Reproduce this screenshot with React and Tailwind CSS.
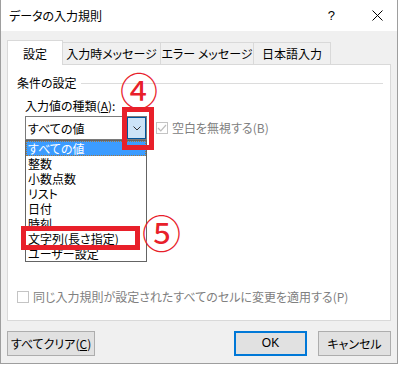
export default function App() {
  const items = ['すべての値', '整数', '小数点数', 'リスト', '日付', '時刻', '文字列(長さ指定)', 'ユーザー設定'];

  return (
    <div className="relative w-[400px] h-[366px] bg-white text-[12px] leading-[15px] text-black [font-family:'Noto_Sans_CJK_JP',sans-serif] [font-feature-settings:'palt']">
      <div className="w-[398px] h-[364px] border-x border-b border-[#9e9e9e] bg-[#f0f0f0] flex flex-col">
        {/* title bar */}
        <div className="h-[31px] bg-white flex items-center pl-[8px] pr-[14px] shrink-0">
          <span className="flex-1">データの入力規則</span>
          <span className="mr-[37px] text-[13px] [font-family:'Liberation_Sans',sans-serif]">?</span>
          <svg width="11" height="11" viewBox="0 0 11 11">
            <path d="M0.5 0.5 L10.5 10.5 M10.5 0.5 L0.5 10.5" stroke="#000" strokeWidth="1" />
          </svg>
        </div>

        <div className="px-[6px] pt-[9px] flex flex-col">
          {/* tabs */}
          <div className="flex items-end h-[25px] -mb-px relative z-10">
            <div className="h-[25px] w-[56px] bg-white border border-b-0 border-[#d9d9d9] flex items-center justify-center pt-[1px]">
              設定
            </div>
            <div className="h-[23px] w-[98px] border border-l-0 border-[#d9d9d9] flex items-center justify-center">
              入力時メッセージ
            </div>
            <div className="h-[23px] w-[93px] border border-l-0 border-[#d9d9d9] flex items-center justify-center">
              エラー メッセージ
            </div>
            <div className="h-[23px] w-[77px] border border-l-0 border-[#d9d9d9] flex items-center justify-center">
              日本語入力
            </div>
          </div>

          {/* panel */}
          <div className="w-[384px] h-[257px] bg-white border border-[#d9d9d9] flex flex-col">
            <div className="flex items-center pl-[9px] pr-[7px] pt-[10px]">
              <span>条件の設定</span>
              <div className="flex-1 h-px bg-[#dcdcdc] ml-[4px] mt-[1px]" />
            </div>

            <div className="pl-[17px] mt-[8px]">
              入力値の種類(<span className="underline">A</span>):
            </div>

            <div className="pl-[17px] mt-[3px] flex items-start">
              <div className="relative">
                <div className="w-[122px] h-[24px] border border-[#7a7a7a] bg-white flex items-center">
                  <span className="flex-1 pl-[2px]">すべての値</span>
                  <div className="w-[19px] h-[22px] bg-[#cce4f7] border border-[#005499] flex items-center justify-center">
                    <svg width="8" height="5" viewBox="0 0 8 5">
                      <path d="M0.5 0.5 L4 4 L7.5 0.5" fill="none" stroke="#333" strokeWidth="1" />
                    </svg>
                  </div>
                </div>
                <div className="absolute top-full left-0 w-[122px] border border-[#646464] bg-white z-10">
                  {items.map((t, i) => (
                    <div
                      key={t}
                      className={
                        i === 0
                          ? 'h-[15px] leading-[14px] pl-[1px] bg-[#3c9cff] text-white border border-dotted border-[#a4773c]'
                          : 'h-[15px] leading-[15px] pl-[2px]'
                      }
                    >
                      {t}
                    </div>
                  ))}
                </div>
              </div>
              <div className="ml-[9px] mt-[4px] flex items-center text-[#808080]">
                <div className="w-[12px] h-[12px] border border-[#c4c4c4] flex items-center justify-center">
                  <svg width="10" height="8" viewBox="0 0 10 8">
                    <path d="M1 4 L3.8 6.8 L9 1" fill="none" stroke="#bdbdbd" strokeWidth="1.2" />
                  </svg>
                </div>
                <span className="ml-[4px]">空白を無視する(B)</span>
              </div>
            </div>

            <div className="mt-auto mb-[16px] pl-[9px] flex items-center text-[#808080]">
              <div className="w-[12px] h-[12px] border border-[#c4c4c4] bg-white" />
              <span className="ml-[4px]">同じ入力規則が設定されたすべてのセルに変更を適用する(P)</span>
            </div>
          </div>
        </div>

        {/* buttons */}
        <div className="flex items-center mt-[10px] px-[6px]">
          <button className="w-[88px] h-[25px] bg-[#e1e1e1] border border-[#adadad]">
            すべてクリア(<span className="underline">C</span>)
          </button>
          <button className="ml-auto w-[73px] h-[25px] bg-[#e1e1e1] border-2 border-[#0078d7] [font-family:'Liberation_Sans',sans-serif]">
            OK
          </button>
          <button className="ml-[11px] w-[73px] h-[25px] bg-[#e1e1e1] border border-[#adadad]">
            キャンセル
          </button>
        </div>
      </div>

      {/* annotations */}
      <div className="absolute left-[122px] top-[107px] w-[32px] h-[43px] border-[5px] border-[#e8202a] z-20" />
      <div className="absolute left-[120px] top-[70px] text-[38px] leading-[38px] text-[#e8202a] z-20">④</div>
      <div className="absolute left-[21px] top-[226px] w-[119px] h-[24px] border-[5px] border-[#e8202a] z-20" />
      <div className="absolute left-[142px] top-[212px] text-[39px] leading-[39px] text-[#e8202a] z-20">⑤</div>
    </div>
  );
}
